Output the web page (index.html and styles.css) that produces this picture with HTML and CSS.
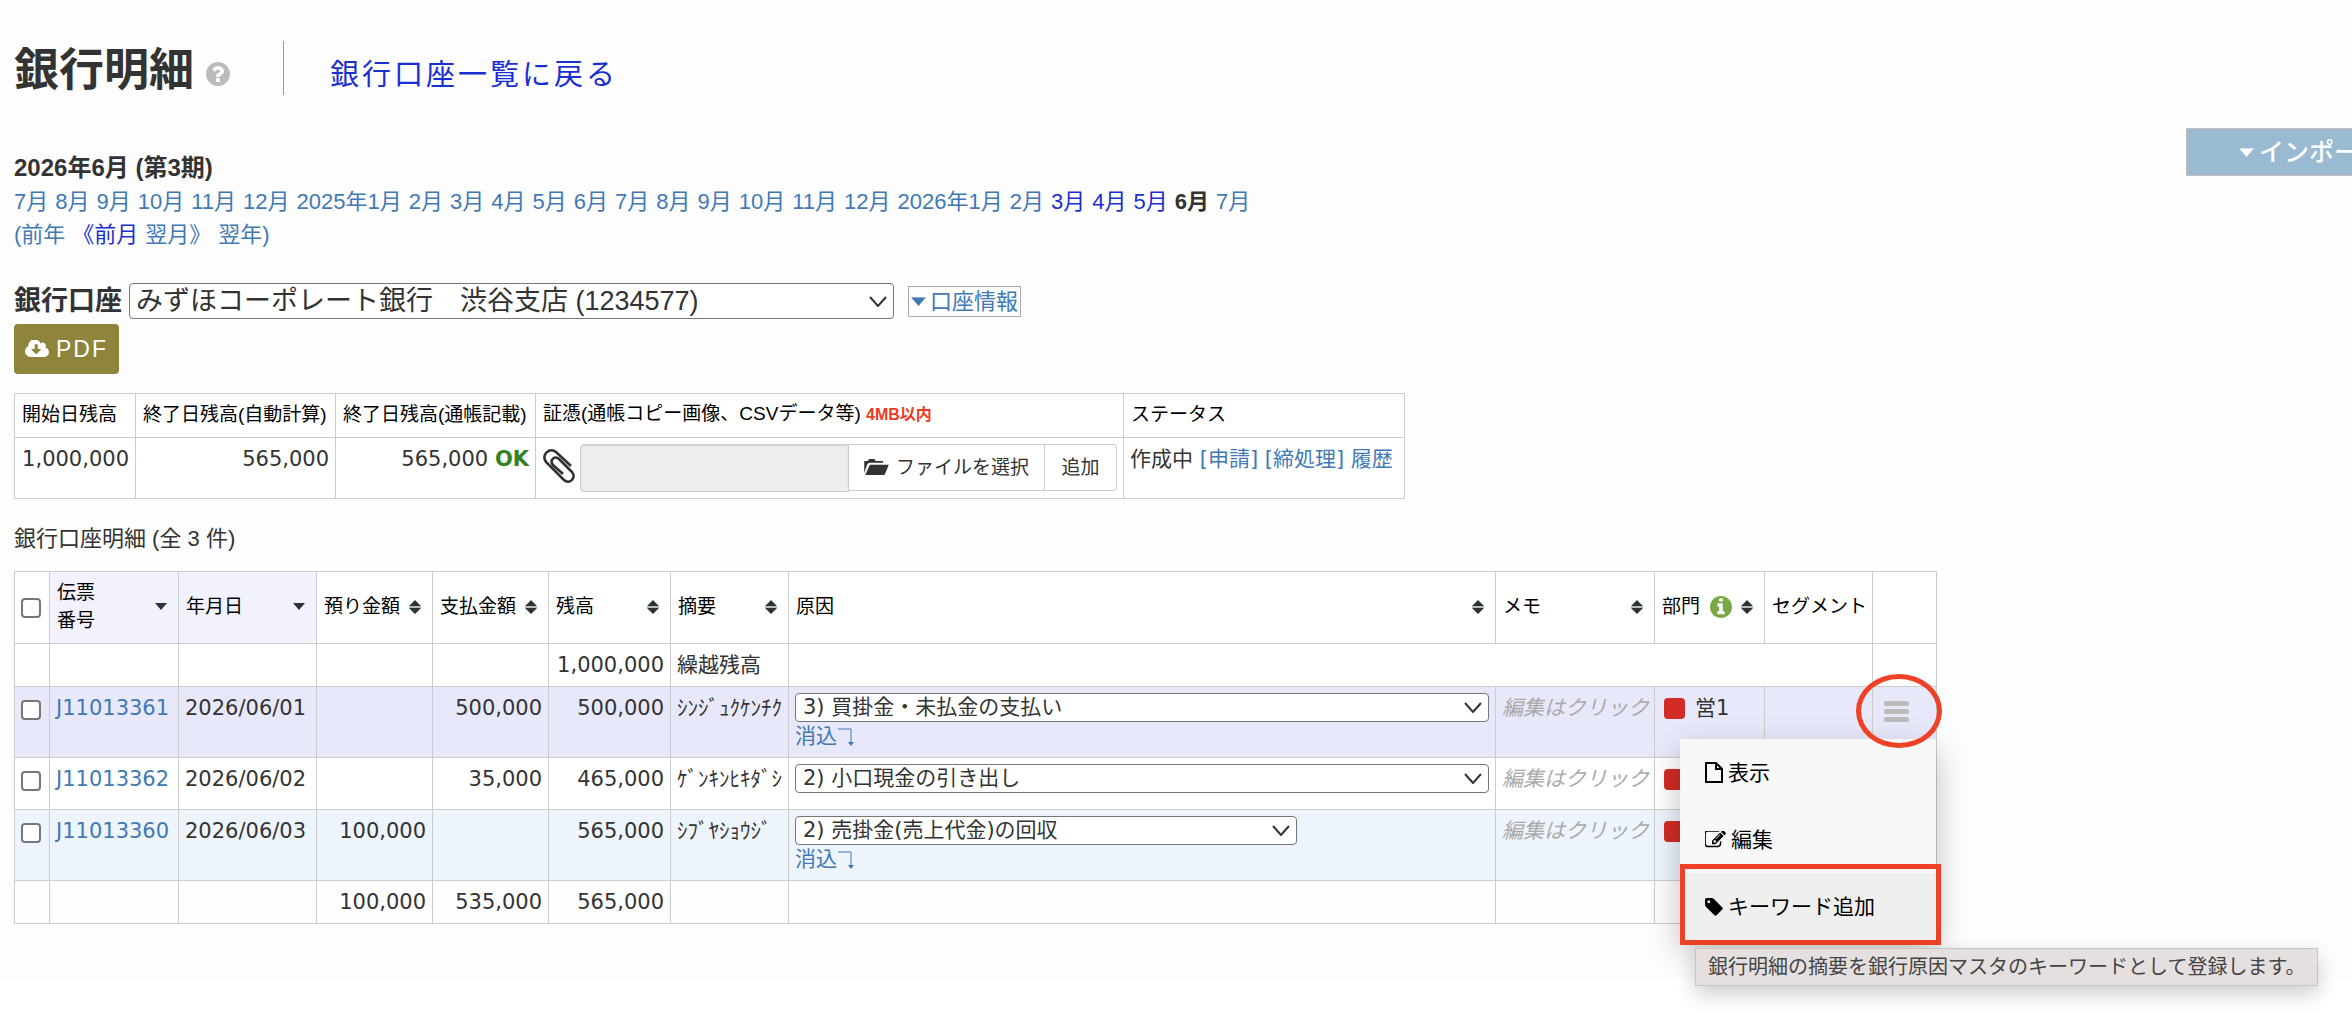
FILE: index.html
```html
<!DOCTYPE html>
<html lang="ja">
<head>
<meta charset="utf-8">
<title>銀行明細</title>
<link rel="stylesheet" href="styles.css">
</head>
<body>
<svg class="defs" aria-hidden="true">
  <symbol id="i-sort" viewBox="0 0 12 14"><path d="M6 0l6 6H0z M0 8h12l-6 6z"/><path class="bar" d="M0 6h12v2H0z"/></symbol>
  <symbol id="i-down" viewBox="0 0 12 7"><path d="M0 0h12L6 7z"/></symbol>
  <symbol id="i-hook" viewBox="0 0 18 20"><path d="M1 2h13v14" fill="none" stroke="currentColor"/><path d="M11 15h6l-3 4z"/></symbol>
</svg>
<main class="page">
  <header class="page-head">
    <h1>銀行明細</h1>
    <a class="help" href="#" aria-label="ヘルプ"><svg viewBox="128 128 1536 1536"><path d="M1024 1376v-192q0-14-9-23t-23-9h-192q-14 0-23 9t-9 23v192q0 14 9 23t23 9h192q14 0 23-9t9-23zm256-672q0-88-55.5-163t-138.5-116-170-41q-243 0-371 213-15 24 8 42l132 100q7 6 19 6 16 0 25-12 53-68 86-92 34-24 86-24 48 0 85.500 26t37.500 59q0 38-20 61t-68 45q-63 28-115.500 86.500t-52.500 125.500v36q0 14 9 23t23 9h192q14 0 23-9t9-23q0-19 21.500-49.500t54.500-49.500q32-18 49-28.500t46-35 44.500-48 28-60.500 12.500-81zm384 192q0 209-103 385.500t-279.500 279.500-385.500 103-385.500-103-279.500-279.500-103-385.500 103-385.500 279.500-279.500 385.500-103 385.500 103 279.500 279.500 103 385.500z"/></svg></a>
    <a class="back" href="#">銀行口座一覧に戻る</a>
  </header>

  <div class="period-row">
    <section class="period">
      <h2>2026年6月 (第3期)</h2>
      <nav class="months">
        <a href="#">7月</a><a href="#">8月</a><a href="#">9月</a><a href="#">10月</a><a href="#">11月</a><a href="#">12月</a><a href="#">2025年1月</a><a href="#">2月</a><a href="#">3月</a><a href="#">4月</a><a href="#">5月</a><a href="#">6月</a><a href="#">7月</a><a href="#">8月</a><a href="#">9月</a><a href="#">10月</a><a href="#">11月</a><a href="#">12月</a><a href="#">2026年1月</a><a href="#">2月</a><a class="open" href="#">3月</a><a class="open" href="#">4月</a><a class="open" href="#">5月</a><strong>6月</strong><a href="#">7月</a>
      </nav>
      <nav class="steps"><a href="#">(前年</a> <a class="open" href="#">《前月</a> <a href="#">翌月》</a> <a href="#">翌年)</a></nav>
    </section>
    <button class="import" type="button"><svg class="caret" viewBox="0 0 12 7"><use href="#i-down"/></svg>インポート</button>
  </div>

  <div class="account-row">
    <label for="account">銀行口座</label>
    <select id="account" class="account"><option>みずほコーポレート銀行　渋谷支店 (1234577)</option></select>
    <a class="account-info" href="#"><svg class="caret" viewBox="0 0 12 7"><use href="#i-down"/></svg>口座情報</a>
  </div>
  <button class="pdf" type="button"><svg viewBox="0 256 1920 1280"><path d="M1280 928q0-14-9-23t-23-9h-224v-352q0-13-9.500-22.500t-22.500-9.500h-192q-13 0-22.500 9.500t-9.500 22.500v352h-224q-13 0-22.500 9.500t-9.500 22.500q0 14 9 23l352 352q9 9 23 9t23-9l351-351q10-12 10-24zm640 224q0 159-112.500 271.500t-271.500 112.500h-1088q-185 0-316.500-131.500t-131.500-316.500q0-130 70-240t188-165q-2-30-2-43 0-212 150-362t362-150q156 0 285.500 87t188.500 231q71-62 166-62 106 0 181 75t75 181q0 76-41 138 130 31 213.500 135.500t83.500 238.500z"/></svg>PDF</button>

  <table class="grid summary">
    <colgroup><col class="s1"><col class="s2"><col class="s2"><col class="s4"><col class="s5"></colgroup>
    <thead><tr><th>開始日残高</th><th>終了日残高(自動計算)</th><th>終了日残高(通帳記載)</th><th>証憑(通帳コピー画像、CSVデータ等) <span class="limit">4MB以内</span></th><th>ステータス</th></tr></thead>
    <tbody><tr>
      <td class="num">1,000,000</td><td class="num">565,000</td><td class="num">565,000 <b class="ok">OK</b></td>
      <td><div class="upload">
        <svg class="clip" viewBox="0 0 34 36"><path d="M29 18L14 4C8 -1 -1 6 4 14L22 32C27 37 35 30 30 24L17 11C13 7 7 12 11 17L21 26"/></svg>
        <input type="text" readonly aria-label="ファイル名"><button class="pick" type="button"><svg viewBox="0 0 26 18"><path d="M0 15V2h4q0-2 2-2h4q2 0 2 2h8v2H6q-2 0-3 2z"/><path d="M6 6h20l-4 10q0 1-2 1H1z"/></svg>ファイルを選択</button><button class="add" type="button">追加</button>
      </div></td>
      <td>作成中 <a href="#">[申請]</a> <a href="#">[締処理]</a> <a href="#">履歴</a></td>
    </tr></tbody>
  </table>

  <p class="count">銀行口座明細 (全 3 件)</p>

  <table class="grid detail">
    <colgroup><col class="c1"><col class="c2"><col class="c3"><col class="c4"><col class="c4"><col class="c6"><col class="c7"><col class="c8"><col class="c9"><col class="c10"><col class="c11"><col class="c12"></colgroup>
    <thead><tr>
      <th class="tick"><input type="checkbox" aria-label="すべて選択"></th>
      <th class="sorted"><div class="h">伝票<br>番号<svg class="desc"><use href="#i-down"/></svg></div></th>
      <th class="sorted"><div class="h">年月日<svg class="desc"><use href="#i-down"/></svg></div></th>
      <th><div class="h">預り金額<svg class="sort"><use href="#i-sort"/></svg></div></th>
      <th><div class="h">支払金額<svg class="sort"><use href="#i-sort"/></svg></div></th>
      <th><div class="h">残高<svg class="sort"><use href="#i-sort"/></svg></div></th>
      <th><div class="h">摘要<svg class="sort"><use href="#i-sort"/></svg></div></th>
      <th><div class="h">原因<svg class="sort"><use href="#i-sort"/></svg></div></th>
      <th><div class="h">メモ<svg class="sort"><use href="#i-sort"/></svg></div></th>
      <th><div class="h">部門<svg class="info" viewBox="128 128 1536 1536"><path d="M1152 1376v-160q0-14-9-23t-23-9h-96v-512q0-14-9-23t-23-9h-320q-14 0-23 9t-9 23v160q0 14 9 23t23 9h96v320h-96q-14 0-23 9t-9 23v160q0 14 9 23t23 9h448q14 0 23-9t9-23zm-128-896v-160q0-14-9-23t-23-9h-192q-14 0-23 9t-9 23v160q0 14 9 23t23 9h192q14 0 23-9t9-23zm640 416q0 209-103 385.500t-279.500 279.500-385.500 103-385.500-103-279.500-279.500-103-385.500 103-385.500 279.500-279.500 385.500-103 385.500 103 279.500 279.500 103 385.500z"/></svg><svg class="sort"><use href="#i-sort"/></svg></div></th>
      <th>セグメント</th>
      <th></th>
    </tr></thead>
    <tbody>
      <tr><td></td><td></td><td></td><td></td><td></td><td class="num">1,000,000</td><td>繰越残高</td><td colspan="4"></td><td></td></tr>
      <tr class="active">
        <td class="tick"><input type="checkbox" aria-label="J11013361を選択"></td>
        <td><a href="#">J11013361</a></td><td>2026/06/01</td><td></td><td class="num">500,000</td><td class="num">500,000</td><td>ｼﾝｼﾞｭｸｹﾝﾁｸ</td>
        <td><select class="cause" aria-label="原因"><option>3) 買掛金・未払金の支払い</option></select><a class="match" href="#">消込<svg><use href="#i-hook"/></svg></a></td>
        <td class="memo">編集はクリック</td>
        <td><div class="dept"><span class="chip"></span>営1</div></td><td></td>
        <td class="actions"><div class="menu-anchor">
          <button class="bars" type="button" aria-label="メニュー"><span></span><span></span><span></span></button>
          <div class="menu">
            <button type="button"><svg class="file" viewBox="0 0 18 21"><path d="M1 1h10l6 6v13H1z M11 1v6h6"/></svg>表示</button>
            <button type="button"><svg class="edit" viewBox="64 192 1728 1408"><path d="M888 1184l116-116-152-152-116 116v56h96v96h56zm440-720q-16-16-33 1l-350 350q-17 17-1 33t33-1l350-350q17-17 1-33zm80 594v190q0 119-84.500 203.500t-203.500 84.500h-832q-119 0-203.500-84.500t-84.500-203.500v-832q0-119 84.500-203.500t203.500-84.500h832q63 0 117 25 15 7 18 23 3 17-9 29l-49 49q-14 14-32 8-23-6-45-6h-832q-66 0-113 47t-47 113v832q0 66 47 113t113 47h832q66 0 113-47t47-113v-126q0-13 9-22l64-64q15-15 35-7t20 29zm-96-738l288 288-672 672h-288v-288zm444 132l-92 92-288-288 92-92q28-28 68-28t68 28l152 152q28 28 28 68t-28 68z"/></svg>編集</button>
            <button class="hover" type="button"><svg class="tag" viewBox="128 128 1536 1536"><path d="M576 448q0-53-37.500-90.500t-90.500-37.500-90.500 37.500-37.500 90.500 37.500 90.500 90.500 37.500 90.500-37.500 37.500-90.500zm1067 576q0 53-37 90l-491 492q-39 37-91 37-53 0-90-37l-715-716q-38-37-64.500-101t-26.500-117v-416q0-52 38-90t90-38h416q53 0 117 26.500t102 64.500l715 714q37 39 37 91z"/></svg>キーワード追加</button>
          </div>
          <div class="ring"></div>
          <div class="frame"></div>
          <div class="tip" role="tooltip">銀行明細の摘要を銀行原因マスタのキーワードとして登録します。</div>
        </div></td>
      </tr>
      <tr class="mid">
        <td class="tick"><input type="checkbox" aria-label="J11013362を選択"></td>
        <td><a href="#">J11013362</a></td><td>2026/06/02</td><td></td><td class="num">35,000</td><td class="num">465,000</td><td>ｹﾞﾝｷﾝﾋｷﾀﾞｼ</td>
        <td><select class="cause" aria-label="原因"><option>2) 小口現金の引き出し</option></select></td>
        <td class="memo">編集はクリック</td><td><div class="dept"><span class="chip"></span></div></td><td></td><td></td>
      </tr>
      <tr class="alt">
        <td class="tick"><input type="checkbox" aria-label="J11013360を選択"></td>
        <td><a href="#">J11013360</a></td><td>2026/06/03</td><td class="num">100,000</td><td></td><td class="num">565,000</td><td>ｼﾌﾞﾔｼｮｳｼﾞ</td>
        <td><select class="cause short" aria-label="原因"><option>2) 売掛金(売上代金)の回収</option></select><a class="match" href="#">消込<svg><use href="#i-hook"/></svg></a></td>
        <td class="memo">編集はクリック</td><td><div class="dept"><span class="chip"></span></div></td><td></td><td></td>
      </tr>
    </tbody>
    <tfoot><tr><td></td><td></td><td></td><td class="num">100,000</td><td class="num">535,000</td><td class="num">565,000</td><td></td><td></td><td></td><td></td><td></td><td></td></tr></tfoot>
  </table>
</main>
</body>
</html>
```
FILE: styles.css
```css
* { box-sizing: border-box; }
body {
  margin: 0;
  min-height: 100vh;
  background: #fff;
  color: #333;
  font: 22px/32px "Liberation Sans", "Noto Sans CJK JP", sans-serif;
}
a { color: #4179b5; text-decoration: none; }
a.open { color: #1a2fd0; }
h1, h2, p { margin: 0; }
button, select, input { font: inherit; color: inherit; margin: 0; }
svg { display: block; fill: currentColor; flex: none; }
.defs { position: absolute; width: 0; height: 0; }
.page {
  background: #fdfdfd;
  padding: 41px 0 56px 14px;
}

/* heading */
.page-head { display: flex; height: 56px; }
h1 { font-size: 45px; line-height: 60px; }
.help { color: #bbb; margin: 21px 0 0 12px; }
.help svg { width: 24px; height: 24px; }
.back {
  margin-left: 53px;
  padding-left: 46px;
  border-left: 1px solid #999;
  font-size: 29px;
  line-height: 68px;
  letter-spacing: 3px;
  height: 54px;
  color: #1a2fd0;
}

/* period */
.period-row { display: flex; justify-content: space-between; margin-top: 31px; overflow-x: clip; }
.period { padding-top: 24px; }
h2 { font-size: 24px; line-height: 32px; }
.months { display: flex; flex-wrap: wrap; gap: 7px; line-height: 36px; }
.steps { display: flex; gap: 7px; line-height: 30px; }
.import {
  display: flex;
  align-items: center;
  gap: 5px;
  width: 240px;
  height: 48px;
  margin-right: -74px;
  padding: 0 52px;
  border: 1px solid #c9c0bd;
  background: #9abad1;
  color: #fff;
  font-size: 25px;
  font-weight: 500;
  line-height: 28px;
  white-space: nowrap;
}
.caret { width: 15px; height: 9px; }

/* account */
.account-row { display: flex; align-items: center; margin-top: 33px; height: 36px; }
.account-row label { font-size: 27px; font-weight: bold; }
select {
  appearance: none;
  border: 1px solid #767676;
  border-radius: 4px;
  background: #fff url("data:image/svg+xml,%3Csvg xmlns='http://www.w3.org/2000/svg' width='18' height='11'%3E%3Cpath d='M1 1l8 9 8-9' fill='none' stroke='%23333' stroke-width='2'/%3E%3C/svg%3E") no-repeat right 6px center;
}
.account { width: 765px; height: 36px; margin-left: 7px; padding: 0 6px; font-size: 27px; line-height: 34px; }
.account-info {
  display: flex;
  align-items: center;
  gap: 4px;
  height: 31px;
  margin: 1px 0 0 14px;
  padding: 0 2px;
  border: 1px solid #aaa;
}
.pdf {
  display: flex;
  align-items: center;
  justify-content: center;
  gap: 7px;
  width: 105px;
  height: 50px;
  margin-top: 5px;
  padding: 0;
  border: 0;
  border-radius: 4px;
  background: #8f843c;
  color: #fff;
  font-size: 23px;
  letter-spacing: 2px;
}
.pdf svg { width: 24px; height: 18px; }

/* tables */
.grid { border-collapse: collapse; table-layout: fixed; background: #fff; }
.grid th, .grid td { border: 1px solid #ccc; text-align: left; white-space: nowrap; }
.grid th { padding: 6px 6px 8px 7px; color: #000; font-size: 19px; line-height: 28px; font-weight: normal; }
.grid td { padding: 6px; vertical-align: top; font: 21px/30px "DejaVu Sans", "Noto Sans CJK JP", sans-serif; }
.grid td.num { text-align: right; }
.summary { width: 1390px; margin-top: 19px; }
.summary tbody tr { height: 61px; }
.s1 { width: 121px; }
.s2 { width: 200px; }
.s4 { width: 588px; }
.s5 { width: 281px; }
.limit { color: #ec3a22; font-size: 16px; font-weight: bold; }
.ok { color: #36811f; }
.upload { display: flex; height: 48px; font: 19px/28px "Liberation Sans", "Noto Sans CJK JP", sans-serif; }
.clip { width: 34px; height: 36px; margin: 4px 4px 0 0; fill: none; stroke: #333; stroke-width: 2.6; }
.upload input { width: 269px; height: 48px; border: 1px solid #ccc; border-radius: 4px 0 0 4px; background: #eee; box-shadow: inset 0 1px 2px rgba(0, 0, 0, .1); }
.upload button { display: flex; align-items: center; justify-content: center; height: 47px; border: 1px solid #ccc; border-left: 0; background: #fff; padding: 0; }
.pick { width: 196px; gap: 7px; }
.pick svg { width: 25px; height: 17px; }
.upload .add { width: 72px; border-radius: 0 4px 4px 0; }
.count { margin: 24px 0 16px; }

.detail { width: 1922px; }
.c1 { width: 35px; }
.c2 { width: 129px; }
.c3 { width: 138px; }
.c4 { width: 116px; }
.c6 { width: 122px; }
.c7 { width: 118px; }
.c8 { width: 707px; }
.c9 { width: 159px; }
.c10 { width: 110px; }
.c11 { width: 108px; }
.c12 { width: 64px; }
.grid .sorted { background: #f2f2fd; }
.h { display: flex; align-items: center; justify-content: space-between; padding-right: 5px; }
.h svg { color: #2a3338; }
.h .sort { width: 12px; height: 14px; }
.h .desc { width: 12px; height: 7px; }
.bar { fill: #b5bdba; }
.h .info { width: 22px; height: 22px; color: #78a843; }
.grid .tick { padding: 0 6px; }
.tick input {
  display: block;
  appearance: none;
  width: 20px;
  height: 20px;
  border: 2px solid #767676;
  border-radius: 4px;
  background: #fff;
}
td.tick input { margin-top: 13px; }
.detail thead tr { height: 72px; }
.mid { height: 52px; }
.active { background: #e8e8fb; }
.alt { background: #eef4fc; }
tfoot { background: #fdfdfd; }
.cause { display: block; width: 100%; height: 29px; padding: 0 7px; line-height: 27px; }
.cause.short { width: 502px; }
.match { display: flex; align-items: flex-start; height: 29px; line-height: 28px; }
.match svg { width: 18px; height: 20px; margin-top: 5px; }
.grid .memo { color: #aaa; font-style: italic; }
.dept { display: flex; align-items: center; gap: 10px; height: 30px; padding-left: 3px; }
.chip { width: 21px; height: 21px; border-radius: 4px; background: #d32c25; }

/* row menu */
.menu-anchor { position: relative; padding: 8px 0 0 5px; }
.bars { display: grid; gap: 3px; width: 25px; padding: 0; border: 0; background: none; }
.bars span { height: 5px; border-radius: 2px; background: #bbb; }
.menu {
  position: absolute;
  z-index: 1;
  top: 46px;
  right: -6px;
  width: 256px;
  background: #f8f8f8;
  box-shadow: 0 12px 30px rgba(0, 0, 0, .25);
}
.menu button {
  display: flex;
  align-items: center;
  gap: 5px;
  width: 100%;
  height: 67px;
  padding: 0 25px;
  border: 0;
  background: none;
  color: #000;
}
.menu .hover { background: #efefef; }
.menu .file { width: 18px; height: 21px; fill: none; stroke: currentColor; stroke-width: 2; }
.menu .edit { width: 21px; height: 17px; }
.menu .tag { width: 18px; height: 18px; }
.ring { position: absolute; z-index: 2; top: -19px; left: -23px; width: 86px; height: 74px; border: 5px solid #ee4125; border-radius: 50%; }
.frame { position: absolute; z-index: 2; top: 171px; right: -11px; width: 261px; height: 81px; border: 5px solid #ee4125; }
.tip {
  position: absolute;
  z-index: 3;
  top: 255px;
  left: -184px;
  padding: 3px 12px;
  border: 1px solid #c8c4c3;
  background: #e5e0df;
  color: #444;
  font-size: 20px;
  box-shadow: 0 8px 20px rgba(0, 0, 0, .2);
}
```
